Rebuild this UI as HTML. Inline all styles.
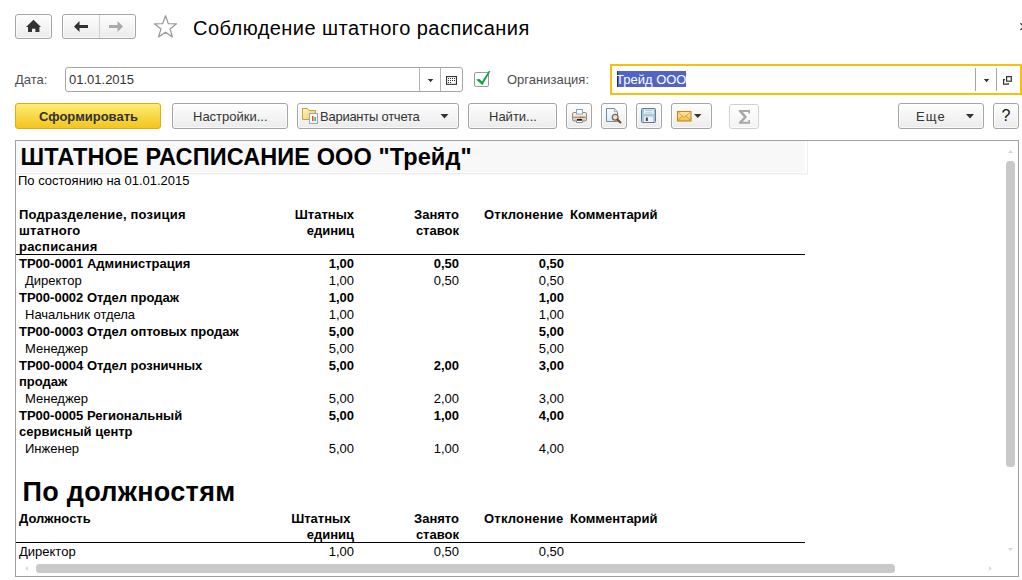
<!DOCTYPE html>
<html><head><meta charset="utf-8">
<style>
*{margin:0;padding:0;box-sizing:border-box}
html,body{width:1022px;height:580px;overflow:hidden;background:#fff}
body{position:relative;font-family:"Liberation Sans",sans-serif;color:#333}
.a{position:absolute}
.t{position:absolute;white-space:nowrap;font-size:13px;line-height:17px}
.r{text-align:right}
.b{font-weight:bold}
.btn{position:absolute;border:1px solid #a5a5a5;border-radius:3px;background:linear-gradient(#fefefe,#ebebeb);box-shadow:inset 0 0 0 1px rgba(255,255,255,.7)}
.rep{color:#000}
svg{position:absolute;overflow:visible}
</style></head><body>

<!-- top nav -->
<div class="btn" style="left:15px;top:14px;width:37px;height:25px"></div>
<svg style="left:0;top:0" width="1022" height="60">
  <path d="M26,27 L33.5,19.8 L41,27 Z M28,26.5 H39.4 V32 H35.4 V28.8 H32 V32 H28 Z" fill="#333"/>
</svg>
<div class="btn" style="left:62px;top:14px;width:74px;height:25px"></div>
<div class="a" style="left:99px;top:15px;width:1px;height:23px;background:#cfcfcf"></div>
<svg style="left:0;top:0" width="1022" height="60">
  <path d="M74,26.5 L79.5,21 V25 H88 V28 H79.5 V32 Z" fill="#333"/>
  <path d="M123,26.5 L117.5,21 V25 H109 V28 H117.5 V32 Z" fill="#aaa"/>
  <path d="M165.5,15.8 L168.3,23.6 L176.6,23.8 L170,28.9 L172.4,36.9 L165.5,32.2 L158.6,36.9 L161,28.9 L154.4,23.8 L162.7,23.6 Z" fill="none" stroke="#9a9a9a" stroke-width="1.3" stroke-linejoin="round"/>
</svg>
<div class="t" style="left:193px;top:16px;font-size:20px;line-height:24px;color:#000;letter-spacing:0.46px">Соблюдение штатного расписания</div>
<svg style="left:0;top:0" width="1022" height="60">
  <path d="M1020.4,23.2 L1027,29.8 M1020.4,30 L1027,23.4" stroke="#3a3a3a" stroke-width="1.3"/>
</svg>

<!-- form row -->
<div class="t" style="left:15px;top:70.5px;color:#4d4d4d">Дата:</div>
<div class="a" style="left:65px;top:67px;width:398px;height:25px;border:1px solid #a5a5a5;border-radius:3px;background:#fff"></div>
<div class="a" style="left:419px;top:68px;width:1px;height:23px;background:#b5b5b5"></div>
<div class="a" style="left:440px;top:68px;width:1px;height:23px;background:#b5b5b5"></div>
<div class="t" style="left:69px;top:70.5px;color:#333">01.01.2015</div>
<svg style="left:0;top:0" width="1022" height="100">
  <path d="M427.8,79 H433.3 L430.55,82.2 Z" fill="#333"/>
  <rect x="446.55" y="76.55" width="9.9" height="7.8" fill="none" stroke="#333" stroke-width="1.1"/>
  <g fill="#333">
    <rect x="448" y="78" width="1" height="1"/><rect x="450" y="78" width="1" height="1"/><rect x="452" y="78" width="1" height="1"/><rect x="454" y="78" width="1" height="1"/>
    <rect x="448" y="80" width="1" height="1"/><rect x="450" y="80" width="1" height="1"/><rect x="452" y="80" width="1" height="1"/><rect x="454" y="80" width="1" height="1"/>
    <rect x="448" y="82" width="1" height="1"/><rect x="450" y="82" width="1" height="1"/>
  </g>
</svg>
<div class="a" style="left:474px;top:72px;width:15px;height:15px;border:1px solid #9a9a9a;border-radius:2px;background:#fff"></div>
<svg style="left:0;top:0" width="1022" height="100">
  <path d="M476,79.6 L479.6,79.1 L482,81.6 L488.8,71 L490.4,71.3 L482.4,85.2 Z" fill="#17a04a"/>
</svg>
<div class="t" style="left:507px;top:70.5px;color:#4d4d4d">Организация:</div>
<div class="a" style="left:610px;top:64px;width:412px;height:31px;border:2px solid #f5c20b;background:#fff"></div>
<div class="a" style="left:617px;top:71px;width:69px;height:16px;background:#5064c4"></div>
<div class="a" style="left:617px;top:71px;width:1px;height:16px;background:#2a2a3a"></div>
<div class="t" style="left:616px;top:71px;color:#fff">Трейд ООО</div>
<div class="a" style="left:975px;top:68px;width:1px;height:23px;background:#a5a5a5"></div>
<div class="a" style="left:996px;top:68px;width:1px;height:23px;background:#a5a5a5"></div>
<svg style="left:0;top:0" width="1022" height="100">
  <path d="M983.8,79 H989.3 L986.55,82.2 Z" fill="#333"/>
  <rect x="1006.6" y="76.6" width="4.7" height="4.6" fill="none" stroke="#333" stroke-width="1.2"/>
  <path d="M1005,79.6 H1003.6 V84.2 H1008.3 V83" fill="none" stroke="#333" stroke-width="1.2"/>
</svg>

<!-- toolbar -->
<div class="a" style="left:15px;top:103px;width:146px;height:26px;border:1px solid #e2ad0c;border-radius:3px;background:linear-gradient(#fdec74,#f3c51f)"></div>
<div class="t b" style="left:39px;top:108px;color:#333">Сформировать</div>
<div class="btn" style="left:172px;top:103px;width:116px;height:26px"></div>
<div class="t" style="left:193px;top:108px">Настройки...</div>
<div class="btn" style="left:297px;top:103px;width:162px;height:26px"></div>
<svg style="left:0;top:0" width="1022" height="140">
  <defs><linearGradient id="fg" x1="0" y1="0" x2="1" y2="1"><stop offset="0" stop-color="#fff6c4"/><stop offset="1" stop-color="#e9c75c"/></linearGradient></defs><path d="M302.5,108.5 H307.5 L309,110.5 H315.5 V119.5 H302.5 Z" fill="url(#fg)" stroke="#c9a23a" stroke-width="1"/>
  <rect x="309.5" y="113.5" width="8" height="10" fill="#f4f8fb" stroke="#94aabb" stroke-width="1"/>
  <rect x="312" y="116" width="1.5" height="5" fill="#e84b3a"/>
  <rect x="314.3" y="117" width="1.7" height="4" fill="#5cba4f"/>
  <path d="M440.5,114 H448.5 L444.5,118.5 Z" fill="#333"/>
</svg>
<div class="t" style="left:320px;top:108px;letter-spacing:-0.25px">Варианты отчета</div>
<div class="btn" style="left:468px;top:103px;width:89px;height:26px"></div>
<div class="t" style="left:489px;top:108px">Найти...</div>
<div class="btn" style="left:566px;top:103px;width:26px;height:26px"></div>
<div class="btn" style="left:601px;top:103px;width:26px;height:26px"></div>
<div class="btn" style="left:636px;top:103px;width:26px;height:26px"></div>
<div class="btn" style="left:671px;top:103px;width:41px;height:26px"></div>
<div class="btn" style="left:729px;top:104px;width:30px;height:25px;border-color:#d0d0d0;background:linear-gradient(#fefefe,#f3f3f3)"></div>
<svg style="left:0;top:0" width="1022" height="140">
  <!-- printer -->
  <defs><linearGradient id="pg" x1="0" y1="0" x2="0" y2="1"><stop offset="0" stop-color="#fbf8f4"/><stop offset="1" stop-color="#d9c3ad"/></linearGradient></defs>
  <rect x="572.5" y="112.5" width="14" height="8.5" rx="1.5" fill="url(#pg)" stroke="#8c8c8c" stroke-width="1"/>
  <rect x="576.5" y="109.5" width="6" height="4.5" fill="#ffffff" stroke="#86a3bb" stroke-width="1"/>
  <rect x="573" y="116.7" width="13" height="1.2" fill="#b6906c"/>
  <circle cx="580.4" cy="117.3" r="0.85" fill="#ee3a2a"/>
  <circle cx="582.7" cy="117.3" r="0.85" fill="#33b84a"/>
  <rect x="577" y="119" width="5" height="1.8" fill="#151515"/>
  <path d="M576.5,120.8 V122.5 H582.5 V120.8" fill="#fff" stroke="#8c8c8c" stroke-width="1"/>
  <!-- preview -->
  <defs><linearGradient id="dg" x1="0" y1="0" x2="0" y2="1"><stop offset="0" stop-color="#ffffff"/><stop offset="1" stop-color="#dbe8f4"/></linearGradient></defs>
  <path d="M606.5,108.5 H614.3 L617.5,111.7 V121.5 H606.5 Z" fill="url(#dg)" stroke="#6d8ca8" stroke-width="1"/>
  <path d="M614.3,108.8 V111.7 H617.2" fill="#e4eef6" stroke="#8aa6bd" stroke-width="0.9"/>
  <circle cx="615.2" cy="117.2" r="2.9" fill="#d2e3f8" stroke="#8f5f30" stroke-width="1.2"/>
  <path d="M617.4,119.4 L620.4,122.4" stroke="#7a4a1e" stroke-width="2.1" stroke-linecap="round"/>
  <!-- save -->
  <rect x="641.5" y="108.5" width="14" height="14" rx="1" fill="#a9c7e0" stroke="#5f7b92" stroke-width="1"/>
  <rect x="644" y="109.5" width="9.5" height="4.5" fill="#f6fafd"/>
  <rect x="645" y="110.2" width="7.5" height="1" fill="#9cc3d8"/>
  <rect x="645" y="112.4" width="7.5" height="1" fill="#9cc3d8"/>
  <rect x="644" y="116.5" width="9" height="5.5" fill="#f0f0f0"/>
  <rect x="645.8" y="117.5" width="2" height="3.5" fill="#34495e"/>
  <!-- mail -->
  <defs><linearGradient id="mg" x1="0" y1="0" x2="0" y2="1"><stop offset="0" stop-color="#fcebb0"/><stop offset="1" stop-color="#efbf4c"/></linearGradient></defs><rect x="677.5" y="111.5" width="13.5" height="9.5" fill="url(#mg)" stroke="#c38a14" stroke-width="1.1"/>
  <path d="M678,112 L684.2,117.5 L690.5,112 M678,120.5 L682.5,116 M690.5,120.5 L686,116" fill="none" stroke="#c88e1a" stroke-width="0.7"/>
  <path d="M694,114 H701.5 L697.75,118 Z" fill="#333"/>
  <!-- sigma -->
  <path d="M738.8,110 H750 V113.6 H748.4 V111.9 H742.9 L747.1,116.9 L742.7,121.8 H748.4 V119.9 H750 V123.7 H738.8 V122.2 L743.8,116.9 L738.8,111.5 Z" fill="#a8a8a8"/>
</svg>
<div class="btn" style="left:898px;top:103px;width:86px;height:26px"></div>
<div class="t" style="left:916px;top:108px;letter-spacing:1.2px">Еще</div>
<svg style="left:0;top:0" width="1022" height="140">
  <path d="M966,114 H974 L970,118.5 Z" fill="#333"/>
</svg>
<div class="btn" style="left:993px;top:103px;width:26px;height:26px"></div>
<div class="t" style="left:1001.5px;top:107px;font-size:16px;color:#111">?</div>

<!-- report frame -->
<div class="a" style="left:15px;top:140px;width:1004px;height:437px;border:1px solid #a0a0a0;background:#fff"></div>
<div class="a" style="left:16px;top:141px;width:789px;height:31px;background:#f8f8f8"></div>
<div class="a" style="left:807px;top:141px;width:1px;height:34px;background:#eeeeee"></div>
<div class="a" style="left:16px;top:173px;width:792px;height:1px;background:#ededed"></div>
<div class="a" style="left:16px;top:174px;width:792px;height:1px;background:#f6f6f6"></div>

<div class="rep">
<div class="t b" style="left:20.5px;top:143px;font-size:23.5px;line-height:28px;letter-spacing:0.1px">ШТАТНОЕ РАСПИСАНИЕ ООО "Трейд"</div>
<div class="t" style="left:18px;top:172px">По состоянию на 01.01.2015</div>

<!-- header 1 -->
<div class="t b" style="left:19px;top:207px;line-height:16px;letter-spacing:0.22px">Подразделение, позиция<br>штатного<br>расписания</div>
<div class="t b r" style="right:668px;top:207px;line-height:16px">Штатных<br>единиц</div>
<div class="t b r" style="right:563px;top:207px;line-height:16px">Занято<br>ставок</div>
<div class="t b" style="left:484px;top:207px;line-height:16px;letter-spacing:0.2px">Отклонение</div>
<div class="t b" style="left:570px;top:207px;line-height:16px">Комментарий</div>
<div class="a" style="left:16px;top:254px;width:789px;height:1px;background:#000"></div>

<!-- rows -->
<div class="t b" style="left:19px;top:255px">ТР00-0001 Администрация</div>
<div class="t b r" style="right:668px;top:255px">1,00</div>
<div class="t b r" style="right:563px;top:255px">0,50</div>
<div class="t b r" style="right:458px;top:255px">0,50</div>

<div class="t" style="left:25px;top:272px">Директор</div>
<div class="t r" style="right:668px;top:272px">1,00</div>
<div class="t r" style="right:563px;top:272px">0,50</div>
<div class="t r" style="right:458px;top:272px">0,50</div>

<div class="t b" style="left:19px;top:289px">ТР00-0002 Отдел продаж</div>
<div class="t b r" style="right:668px;top:289px">1,00</div>
<div class="t b r" style="right:458px;top:289px">1,00</div>

<div class="t" style="left:25px;top:306px">Начальник отдела</div>
<div class="t r" style="right:668px;top:306px">1,00</div>
<div class="t r" style="right:458px;top:306px">1,00</div>

<div class="t b" style="left:19px;top:323px">ТР00-0003 Отдел оптовых продаж</div>
<div class="t b r" style="right:668px;top:323px">5,00</div>
<div class="t b r" style="right:458px;top:323px">5,00</div>

<div class="t" style="left:25px;top:340px">Менеджер</div>
<div class="t r" style="right:668px;top:340px">5,00</div>
<div class="t r" style="right:458px;top:340px">5,00</div>

<div class="t b" style="left:19px;top:358px;line-height:16px">ТР00-0004 Отдел розничных<br>продаж</div>
<div class="t b r" style="right:668px;top:357px">5,00</div>
<div class="t b r" style="right:563px;top:357px">2,00</div>
<div class="t b r" style="right:458px;top:357px">3,00</div>

<div class="t" style="left:25px;top:390px">Менеджер</div>
<div class="t r" style="right:668px;top:390px">5,00</div>
<div class="t r" style="right:563px;top:390px">2,00</div>
<div class="t r" style="right:458px;top:390px">3,00</div>

<div class="t b" style="left:19px;top:408px;line-height:16px">ТР00-0005 Региональный<br>сервисный центр</div>
<div class="t b r" style="right:668px;top:407px">5,00</div>
<div class="t b r" style="right:563px;top:407px">1,00</div>
<div class="t b r" style="right:458px;top:407px">4,00</div>

<div class="t" style="left:25px;top:440px">Инженер</div>
<div class="t r" style="right:668px;top:440px">5,00</div>
<div class="t r" style="right:563px;top:440px">1,00</div>
<div class="t r" style="right:458px;top:440px">4,00</div>

<div class="t b" style="left:22.5px;top:476px;font-size:27px;line-height:32px;letter-spacing:0.3px">По должностям</div>

<div class="t b" style="left:19px;top:511px;line-height:16px">Должность</div>
<div class="t b r" style="right:668px;top:511px;line-height:16px"><span style="margin-right:3.6px">Штатных</span><br>единиц</div>
<div class="t b r" style="right:563px;top:511px;line-height:16px">Занято<br>ставок</div>
<div class="t b" style="left:484px;top:511px;line-height:16px;letter-spacing:0.2px">Отклонение</div>
<div class="t b" style="left:570px;top:511px;line-height:16px">Комментарий</div>
<div class="a" style="left:16px;top:542px;width:789px;height:1px;background:#000"></div>

<div class="t" style="left:19px;top:543px">Директор</div>
<div class="t r" style="right:668px;top:543px">1,00</div>
<div class="t r" style="right:563px;top:543px">0,50</div>
<div class="t r" style="right:458px;top:543px">0,50</div>
</div>

<!-- scrollbars -->
<svg style="left:0;top:0" width="1022" height="580">
  <path d="M1008,153 L1010.5,150 L1013,153 Z" fill="#d6d6d6"/>
  <rect x="1006" y="161" width="9" height="306" rx="3.5" fill="#c9c9c9"/>
  <path d="M1008,548 L1013,548 L1010.5,551 Z" fill="#d6d6d6"/>
  <rect x="36" y="564" width="859" height="9" rx="3.5" fill="#c9c9c9"/>
  <path d="M28,566 L25,568.5 L28,571 Z" fill="#dcdcdc"/>
  <path d="M989,566 L992,568.5 L989,571 Z" fill="#dcdcdc"/>
</svg>
</body></html>
